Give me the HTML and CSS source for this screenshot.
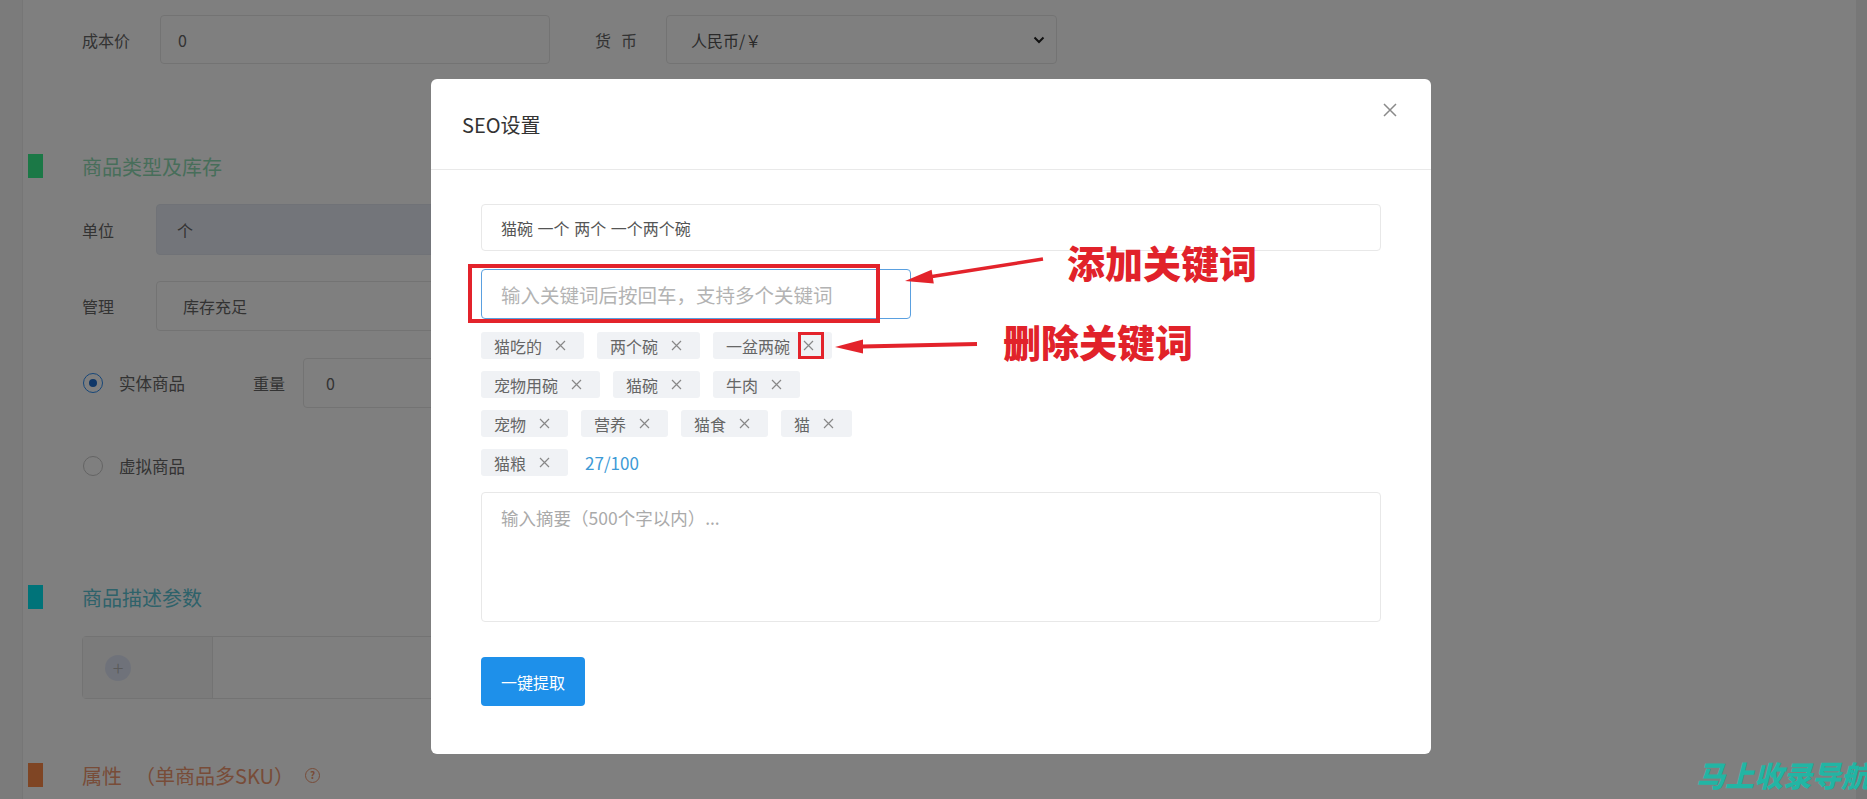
FILE: index.html
```html
<!DOCTYPE html>
<html lang="zh-CN">
<head>
<meta charset="utf-8">
<title>SEO设置</title>
<link rel="stylesheet" href="styles.css">
</head>
<body>
<div class="page">
  <aside class="sidebar"></aside>
  <main class="main">
    <div class="form-row row-price">
      <span class="label label-78">成本价</span>
      <div class="input input-price">0</div>
      <span class="label label-cur">货<span class="label-gap"></span>币</span>
      <div class="input input-select">人民币/￥
        <svg class="chevron" width="12" height="8" viewBox="0 0 12 8"><path d="M1.5 1.5 L6 6 L10.5 1.5" fill="none" stroke="#222" stroke-width="2"/></svg>
      </div>
    </div>

    <div class="section section-green"><span class="bar"></span><span class="section-title">商品类型及库存</span></div>

    <div class="form-row row-unit">
      <span class="label label-74">单位</span>
      <div class="input input-disabled">个</div>
    </div>

    <div class="form-row row-manage">
      <span class="label label-74">管理</span>
      <div class="input input-manage">库存充足</div>
    </div>

    <div class="form-row row-radio">
      <span class="radio radio-checked"></span>
      <span class="radio-text">实体商品</span>
      <span class="label label-weight">重量</span>
      <div class="input input-weight">0</div>
    </div>

    <div class="form-row row-radio2">
      <span class="radio"></span>
      <span class="radio-text">虚拟商品</span>
    </div>

    <div class="section section-teal"><span class="bar"></span><span class="section-title">商品描述参数</span></div>

    <div class="param-box">
      <div class="param-add"><span class="plus">+</span></div>
      <div class="param-rest"></div>
    </div>

    <div class="section section-orange"><span class="bar"></span><span class="section-title">属性</span><span class="section-sub">（单商品多SKU）</span><span class="help">?</span></div>
  </main>
  <div class="scrollbar"></div>
</div>

<div class="mask"></div>

<div class="modal">
  <div class="modal-header">
    <span class="modal-title">SEO设置</span>
    <svg class="modal-close" width="14" height="14" viewBox="0 0 14 14"><path d="M1 1 L13 13 M13 1 L1 13" stroke="#8a8a8a" stroke-width="1.5" fill="none"/></svg>
  </div>
  <div class="modal-body">
    <div class="field seo-title">猫碗 一个 两个 一个两个碗</div>
    <div class="field kw-input">输入关键词后按回车，支持多个关键词</div>
    <div class="tags">
      <div class="tag-row">
        <span class="tag">猫吃的<svg class="tag-x" width="11" height="11" viewBox="0 0 11 11"><path d="M1 1 L10 10 M10 1 L1 10" stroke="#888" stroke-width="1.2"/></svg></span>
        <span class="tag">两个碗<svg class="tag-x" width="11" height="11" viewBox="0 0 11 11"><path d="M1 1 L10 10 M10 1 L1 10" stroke="#888" stroke-width="1.2"/></svg></span>
        <span class="tag">一盆两碗<svg class="tag-x" width="11" height="11" viewBox="0 0 11 11"><path d="M1 1 L10 10 M10 1 L1 10" stroke="#888" stroke-width="1.2"/></svg></span>
      </div>
      <div class="tag-row">
        <span class="tag">宠物用碗<svg class="tag-x" width="11" height="11" viewBox="0 0 11 11"><path d="M1 1 L10 10 M10 1 L1 10" stroke="#888" stroke-width="1.2"/></svg></span>
        <span class="tag">猫碗<svg class="tag-x" width="11" height="11" viewBox="0 0 11 11"><path d="M1 1 L10 10 M10 1 L1 10" stroke="#888" stroke-width="1.2"/></svg></span>
        <span class="tag">牛肉<svg class="tag-x" width="11" height="11" viewBox="0 0 11 11"><path d="M1 1 L10 10 M10 1 L1 10" stroke="#888" stroke-width="1.2"/></svg></span>
      </div>
      <div class="tag-row">
        <span class="tag">宠物<svg class="tag-x" width="11" height="11" viewBox="0 0 11 11"><path d="M1 1 L10 10 M10 1 L1 10" stroke="#888" stroke-width="1.2"/></svg></span>
        <span class="tag">营养<svg class="tag-x" width="11" height="11" viewBox="0 0 11 11"><path d="M1 1 L10 10 M10 1 L1 10" stroke="#888" stroke-width="1.2"/></svg></span>
        <span class="tag">猫食<svg class="tag-x" width="11" height="11" viewBox="0 0 11 11"><path d="M1 1 L10 10 M10 1 L1 10" stroke="#888" stroke-width="1.2"/></svg></span>
        <span class="tag">猫<svg class="tag-x" width="11" height="11" viewBox="0 0 11 11"><path d="M1 1 L10 10 M10 1 L1 10" stroke="#888" stroke-width="1.2"/></svg></span>
      </div>
      <div class="tag-row">
        <span class="tag">猫粮<svg class="tag-x" width="11" height="11" viewBox="0 0 11 11"><path d="M1 1 L10 10 M10 1 L1 10" stroke="#888" stroke-width="1.2"/></svg></span>
        <span class="tag-count">27/100</span>
      </div>
    </div>
    <div class="field summary">输入摘要（500个字以内）...</div>
    <button class="btn-extract">一键提取</button>
  </div>
</div>

<div class="annotations">
  <svg class="arrows" width="1867" height="799" viewBox="0 0 1867 799">
    <line x1="1043" y1="259" x2="932" y2="276.6" stroke="#e3232b" stroke-width="3.5"/>
    <polygon points="905,281 931.6,269.7 933.8,283.5" fill="#e3232b"/>
    <line x1="977" y1="344" x2="862" y2="346.4" stroke="#e3232b" stroke-width="4"/>
    <polygon points="835,347 863,339.4 863,353.4" fill="#e3232b"/>
  </svg>
  <div class="note-box note-box-add"></div>
  <div class="note-box note-box-del"></div>
  <div class="note note-add">添加关键词</div>
  <div class="note note-del">删除关键词</div>
</div>

<div class="watermark">马上收录导航</div>
</body>
</html>
```

FILE: styles.css
```css
* { box-sizing: border-box; margin: 0; padding: 0; }

html, body {
  width: 1867px;
  height: 799px;
  overflow: hidden;
}

body {
  position: relative;
  background: #fff;
  color: #666;
  font-family: "Noto Sans CJK SC", "Noto Sans", sans-serif;
  font-size: 16px;
}

/* ---------- background page ---------- */
.page {
  display: flex;
  height: 799px;
}

.sidebar {
  flex: none;
  width: 23px;
  background: #f6f6f6;
  border-right: 1px solid #ececec;
}

.main {
  flex: 1;
  padding-left: 5px;
  overflow: hidden;
}

.scrollbar {
  flex: none;
  width: 11px;
  background: #eeeeee;
}

.form-row {
  display: flex;
  align-items: center;
  margin-left: 54px;
}

.label {
  flex: none;
  display: inline-flex;
  align-items: center;
  color: #666;
  font-size: 16px;
  white-space: pre;
}

.label-gap {
  display: inline-block;
  width: 10px;
}

.label-78 { width: 78px; }
.label-74 { width: 74px; }
.label-cur { width: 71px; margin-left: 45px; }
.label-weight { margin-left: 68px; width: 50px; }

.input {
  flex: none;
  display: flex;
  align-items: center;
  height: 100%;
  border: 1px solid #e6e6e6;
  border-radius: 4px;
  color: #666;
  font-size: 16px;
}

.row-price { margin-top: 15px; height: 49px; }
.input-price { width: 390px; padding-left: 17px; }
.input-select { width: 391px; padding-left: 24px; position: relative; color: #555; }
.chevron { margin-left: auto; margin-right: 11px; }

.section {
  display: flex;
  align-items: center;
  height: 24px;
}

.bar {
  flex: none;
  width: 15px;
  height: 24px;
}

.section-title {
  margin-left: 39px;
  font-size: 20px;
}

.section-green { margin-top: 90px; }
.section-green .bar { background: #36f08c; }
.section-green .section-title { color: #8fdcb4; }

.row-unit { margin-top: 26px; height: 51px; }
.input-disabled {
  width: 394px;
  padding-left: 20px;
  background: #e6ebf4;
  border-color: #e0e5ee;
  color: #666;
}

.row-manage { margin-top: 26px; height: 50px; }
.input-manage { width: 394px; padding-left: 26px; }

.row-radio { margin-top: 27px; height: 50px; }
.row-radio2 { margin-top: 33px; height: 50px; }

.radio {
  flex: none;
  width: 20px;
  height: 20px;
  margin-left: 1px;
  border: 1px solid #c8c8c8;
  border-radius: 50%;
  display: flex;
  align-items: center;
  justify-content: center;
}

.radio-checked { border-color: #2d8cf0; }
.radio-checked::after {
  content: "";
  width: 8px;
  height: 8px;
  border-radius: 50%;
  background: #1e6fd0;
}

.radio-text {
  margin-left: 16px;
  color: #666;
  font-size: 16.5px;
}

.input-weight { width: 400px; padding-left: 22px; }

.section-teal { margin-top: 94px; }
.section-teal .bar { background: #00e6f2; }
.section-teal .section-title { color: #5cc4d4; }

.param-box {
  display: flex;
  margin-left: 54px;
  margin-top: 27px;
  width: 700px;
  height: 63px;
  border: 1px solid #e6e6e6;
  border-radius: 4px;
}

.param-add {
  width: 130px;
  display: flex;
  align-items: center;
  padding-left: 22px;
  background: #f6f6f6;
  border-right: 1px solid #e6e6e6;
}

.plus {
  width: 26px;
  height: 26px;
  border-radius: 50%;
  background: #dfe5f5;
  color: #b5b5b5;
  font-size: 20px;
  line-height: 25px;
  text-align: center;
  font-weight: 300;
}

.section-orange { margin-top: 64px; }
.section-orange .bar { background: #ff8a48; }
.section-orange .section-title { color: #f09870; }
.section-sub {
  margin-left: 13px;
  font-size: 20px;
  color: #f09870;
}

.help {
  margin-left: 11px;
  width: 15px;
  height: 15px;
  border: 1.5px solid #f09870;
  border-radius: 50%;
  color: #f09870;
  font-size: 10px;
  line-height: 12px;
  text-align: center;
  font-weight: 700;
}

/* ---------- mask + modal ---------- */
.mask {
  position: absolute;
  inset: 0;
  background: rgba(0, 0, 0, 0.5);
}

.modal {
  position: absolute;
  left: 431px;
  top: 79px;
  width: 1000px;
  height: 675px;
  background: #fff;
  border-radius: 6px;
}

.modal-header {
  position: relative;
  display: flex;
  align-items: center;
  height: 91px;
  padding-left: 31px;
  border-bottom: 1px solid #e9e9e9;
}

.modal-title {
  color: #333;
  font-size: 20px;
}

.modal-close {
  position: absolute;
  right: 34px;
  top: 24px;
}

.modal-body {
  padding: 34px 50px 48px;
}

.field {
  display: flex;
  align-items: center;
  border: 1px solid #e8e8e8;
  border-radius: 4px;
  padding-left: 19px;
}

.seo-title {
  height: 47px;
  color: #555;
  font-size: 16px;
  word-spacing: 1px;
}

.kw-input {
  margin-top: 18px;
  width: 430px;
  height: 50px;
  border-color: #5aa0e0;
  color: #b3b3b3;
  font-size: 19.5px;
}

.tags {
  display: flex;
  flex-direction: column;
  gap: 12px;
  margin-top: 13px;
}

.tag-row {
  display: flex;
  align-items: center;
  gap: 13px;
}

.tag {
  display: inline-flex;
  align-items: center;
  height: 27px;
  padding: 0 18px 0 13px;
  background: #f0f2f5;
  border-radius: 3px;
  color: #666;
  font-size: 16px;
}

.tag-x {
  margin-left: 13px;
}

.tag-count {
  margin-left: 4px;
  color: #3d9ad6;
  font-size: 17px;
}

.summary {
  align-items: flex-start;
  margin-top: 16px;
  height: 130px;
  padding-top: 12px;
  color: #aaa;
  font-size: 17.5px;
}

.btn-extract {
  display: block;
  margin-top: 35px;
  width: 104px;
  height: 49px;
  border: none;
  border-radius: 4px;
  background: #1e90ea;
  color: #fff;
  font-family: "Noto Sans CJK SC", "Noto Sans", sans-serif;
  font-size: 16px;
}

/* ---------- annotations ---------- */
.annotations {
  position: absolute;
  inset: 0;
  pointer-events: none;
}

.arrows {
  position: absolute;
  left: 0;
  top: 0;
}

.note-box {
  position: absolute;
  border: 4px solid #e3232b;
}

.note-box-add {
  left: 468px;
  top: 264px;
  width: 412px;
  height: 59px;
}

.note-box-del {
  left: 798px;
  top: 332px;
  width: 26px;
  height: 27px;
  border-width: 3px;
}

.note {
  position: absolute;
  color: #e1222a;
  font-size: 38px;
  font-weight: 900;
  line-height: 1;
  letter-spacing: 0;
}

.note-add { left: 1067px; top: 243px; }
.note-del { left: 1003px; top: 322px; }

.watermark {
  position: absolute;
  left: 1696px;
  top: 760px;
  color: #22b5a4;
  font-size: 29px;
  font-weight: 900;
  font-style: italic;
  line-height: 1;
  white-space: nowrap;
}
```
